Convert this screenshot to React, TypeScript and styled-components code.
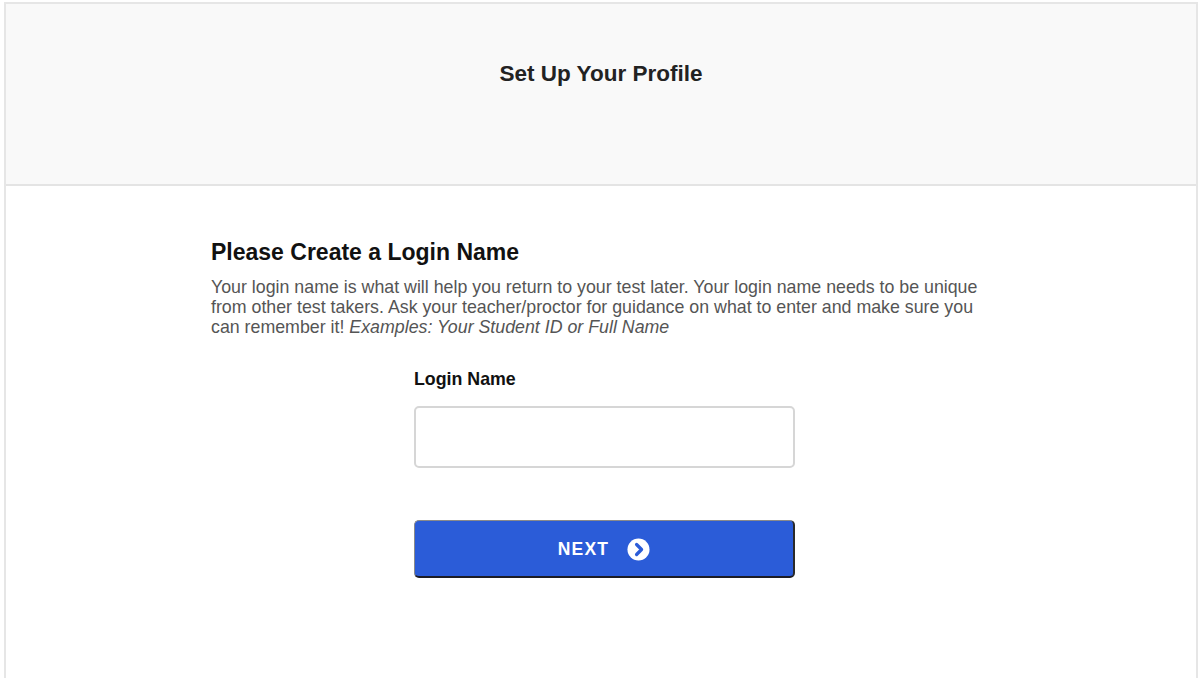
import React from "react";
import styled, { createGlobalStyle } from "styled-components";

const GlobalStyle = createGlobalStyle`
  html, body {
    margin: 0;
    padding: 0;
    background: #ffffff;
    font-family: "Liberation Sans", Arial, Helvetica, sans-serif;
  }
  * { box-sizing: border-box; }
`;

const Frame = styled.div`
  margin: 2px 2px 0 4px;
  height: 676px;
  border: 2px solid #e6e6e6;
  border-bottom: none;
  display: flex;
  flex-direction: column;
  background: #ffffff;
`;

const Header = styled.header`
  height: 182px;
  background: #f9f9f9;
  border-bottom: 2px solid #e4e4e4;
  display: flex;
  justify-content: center;
  padding-top: 56px;
`;

const Title = styled.h1`
  margin: 0;
  font-size: 22.5px;
  line-height: 28px;
  font-weight: 700;
  color: #222222;
`;

const Content = styled.main`
  width: 780px;
  margin: 0 auto;
  padding-top: 52px;
  display: flex;
  flex-direction: column;
`;

const Heading = styled.h2`
  margin: 0 0 11px 0;
  font-size: 23px;
  line-height: 28px;
  font-weight: 700;
  color: #111111;
`;

const Description = styled.p`
  margin: 0;
  font-size: 17.8px;
  line-height: 20px;
  color: #555555;
  width: 780px;
`;

const Example = styled.em`
  font-style: italic;
`;

const FormColumn = styled.div`
  width: 381px;
  margin-left: 203px;
  margin-top: 32px;
  display: flex;
  flex-direction: column;
`;

const Label = styled.label`
  font-size: 17.8px;
  line-height: 20px;
  font-weight: 700;
  color: #111111;
`;

const Input = styled.input`
  margin-top: 17px;
  height: 62px;
  width: 100%;
  border: 2px solid #d6d6d6;
  border-radius: 5px;
  background: #ffffff;
  font-size: 16px;
  font-family: inherit;
  padding: 0 12px;
  outline: none;
`;

const Button = styled.button`
  margin-top: 52px;
  height: 58px;
  width: 100%;
  background: #2b5cd8;
  border: 1px solid;
  border-color: #8a8a8a #2a2a2a #1c1c24 #8a8a8a;
  border-width: 1px 2px 2px 1px;
  border-radius: 5px;
  display: flex;
  align-items: center;
  justify-content: center;
  gap: 18px;
  color: #ffffff;
  font-family: inherit;
  font-size: 17.5px;
  font-weight: 700;
  letter-spacing: 1.2px;
  cursor: pointer;
  padding: 2px 0 0 0;
`;

const ButtonIcon = styled.svg`
  width: 23px;
  height: 23px;
  display: block;
`;

function NextIcon() {
  return (
    <ButtonIcon viewBox="0 0 24 24" aria-hidden="true">
      <circle cx="12" cy="12" r="11.5" fill="#ffffff" />
      <path
        d="M10 6.8 L15.2 12 L10 17.2"
        fill="none"
        stroke="#2b5cd8"
        strokeWidth="3.4"
        strokeLinecap="round"
        strokeLinejoin="round"
      />
    </ButtonIcon>
  );
}

export default function App() {
  return (
    <>
      <GlobalStyle />
      <Frame>
        <Header>
          <Title>Set Up Your Profile</Title>
        </Header>
        <Content>
          <Heading>Please Create a Login Name</Heading>
          <Description>
            Your login name is what will help you return to your test later. Your login name needs to be unique
            from other test takers. Ask your teacher/proctor for guidance on what to enter and make sure you
            can remember it! <Example>Examples: Your Student ID or Full Name</Example>
          </Description>
          <FormColumn>
            <Label htmlFor="login-name">Login Name</Label>
            <Input id="login-name" type="text" />
            <Button type="button">
              NEXT
              <NextIcon />
            </Button>
          </FormColumn>
        </Content>
      </Frame>
    </>
  );
}
